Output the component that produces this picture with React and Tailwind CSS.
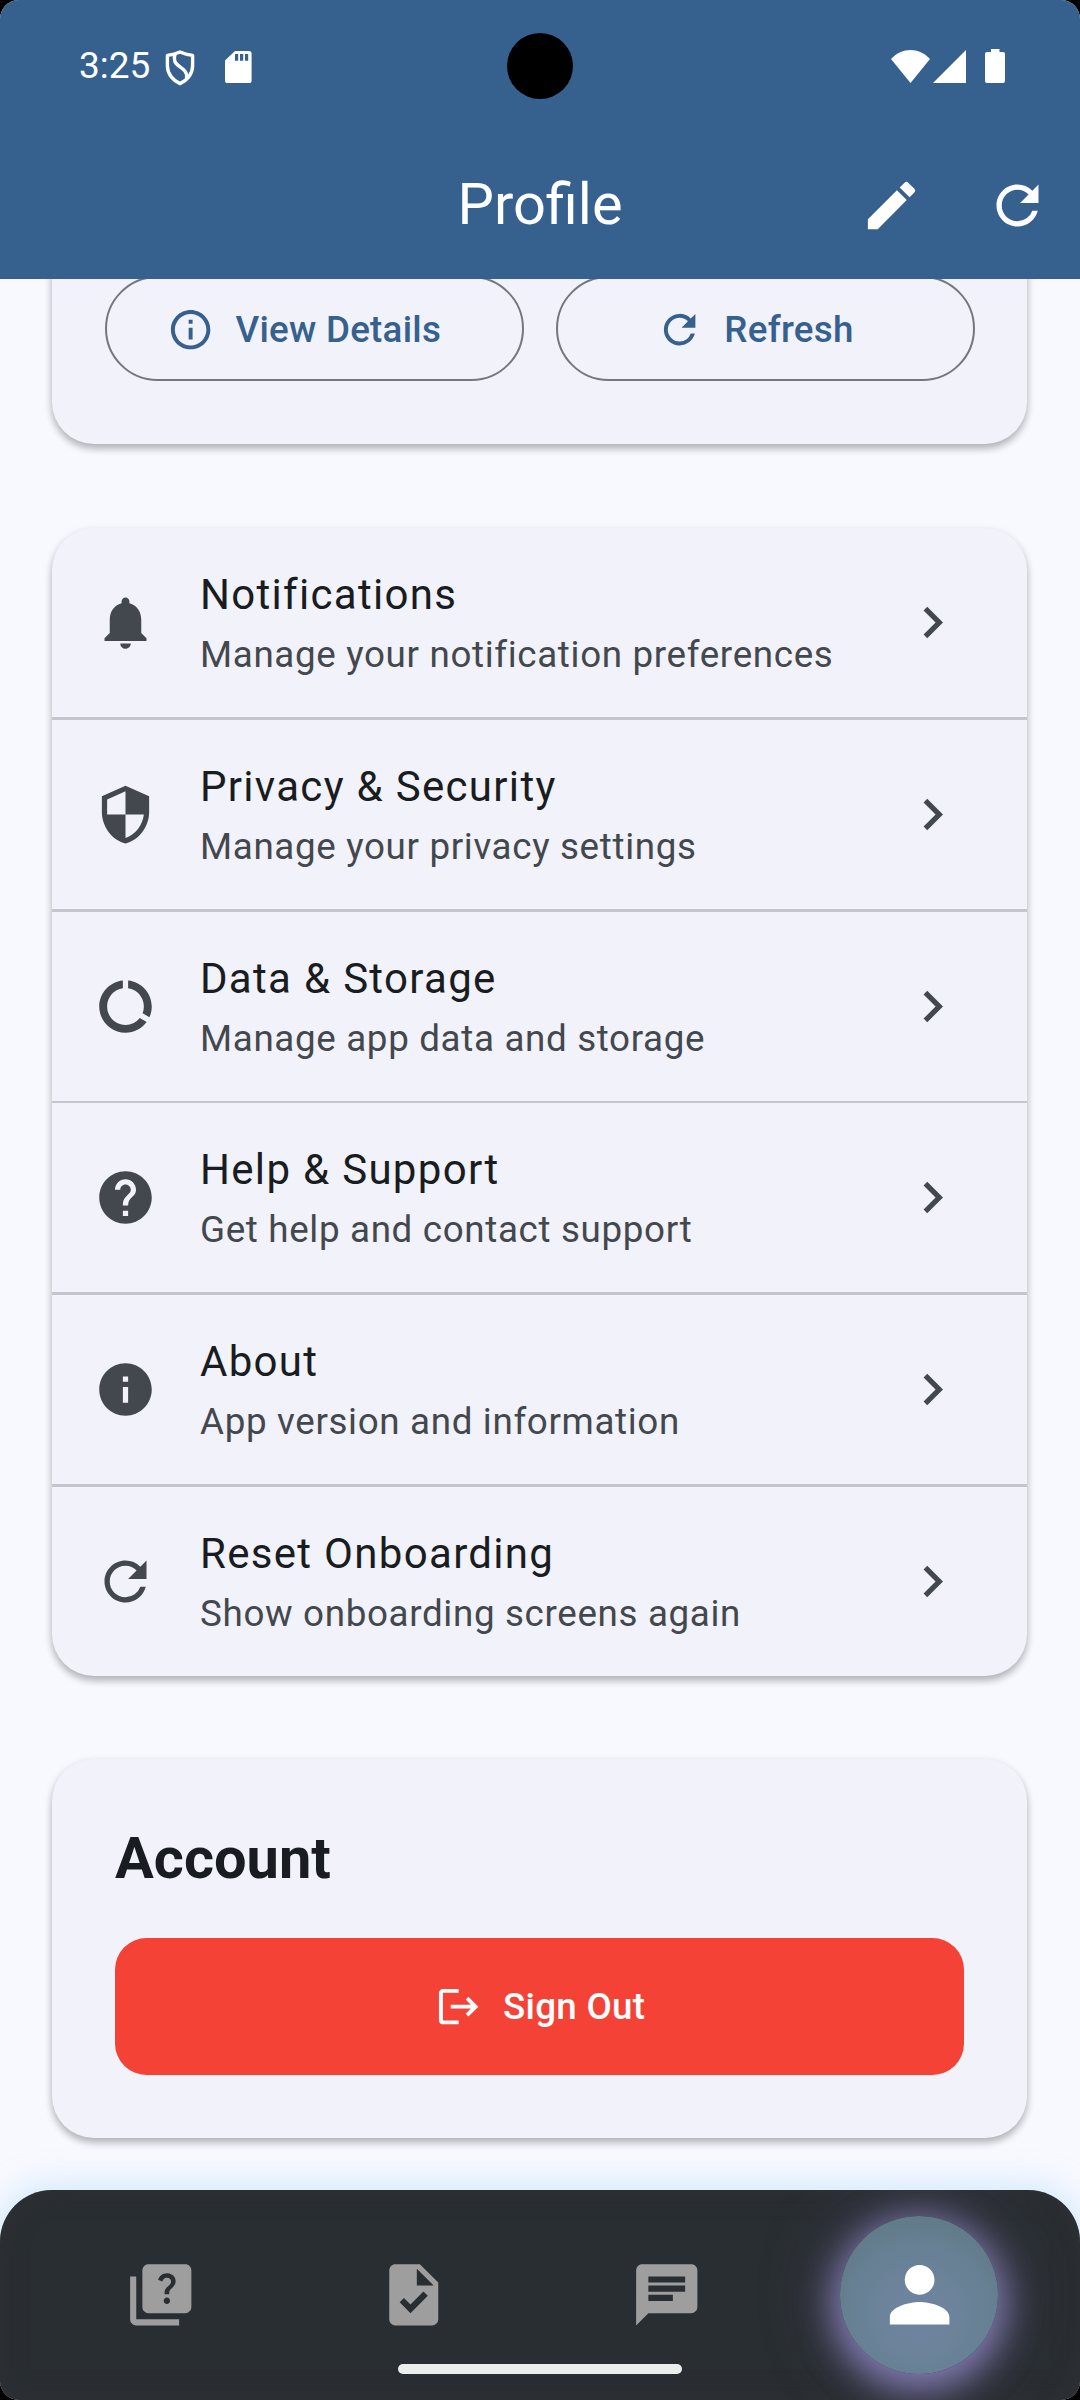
import {
  MdEdit, MdRefresh, MdNotifications, MdSecurity, MdDataUsage, MdHelp, MdInfo,
  MdOutlineInfo, MdQuiz, MdTask, MdChat, MdPerson, MdChevronRight,
} from "react-icons/md";

const settings = [
  { icon: MdNotifications, title: "Notifications", sub: "Manage your notification preferences", line: "h-[3px]" },
  { icon: MdSecurity, title: "Privacy & Security", sub: "Manage your privacy settings", line: "h-[3px]" },
  { icon: MdDataUsage, title: "Data & Storage", sub: "Manage app data and storage", line: "h-[2px]" },
  { icon: MdHelp, title: "Help & Support", sub: "Get help and contact support", line: "h-[3px]" },
  { icon: MdInfo, title: "About", sub: "App version and information", line: "h-[3px]" },
  { icon: MdRefresh, title: "Reset Onboarding", sub: "Show onboarding screens again", line: null },
];

const CARD = "rounded-[42px] bg-[#f1f2fa] shadow-[0_5px_7px_rgba(0,0,0,0.2),0_3px_10px_rgba(0,0,0,0.12)]";

function StatusBar() {
  return (
    <div className="grid h-[132px] grid-cols-[507px_66px_507px] items-center text-white">
      <div className="flex items-center pl-[79px]">
        <span className="text-[37px] leading-[44px]">3:25</span>
        <svg className="ml-[15px] mt-[3px] h-[36px] w-[30px]" viewBox="0 0 30 36" fill="none" stroke="currentColor" strokeWidth="3.4" strokeLinejoin="round">
          <path d="M15 2 C18.5 3.6 23 4.8 27.6 5.4 V16 C27.6 24 22 30.5 15 33.6 C8 30.5 2.4 24 2.4 16 V5.4 C7 4.8 11.5 3.6 15 2 Z" />
          <path d="M10 4.2 C6 19 23.5 15.5 21.6 28" />
        </svg>
        <svg className="ml-[30px] mt-[2px] h-[32px] w-[27px]" viewBox="0 0 27 32" fill="currentColor">
          <path fillRule="evenodd" d="M10 0 H24 Q26.6 0 26.6 2.6 V29.4 Q26.6 32 24 32 H2.6 Q0 32 0 29.4 V9.5 Z M10 3 V9.7 H13.2 V3 Z M15 3 V9.7 H18.2 V3 Z M20 3 V9.7 H23.2 V3 Z" />
        </svg>
      </div>
      <div className="size-[66px] rounded-full bg-black" />
      <div className="flex items-center pl-[318px]">
        <svg className="h-[33px] w-[39px]" viewBox="0 0 39 33" fill="currentColor">
          <path d="M19.5 33 L0 9 C11 -3 28 -3 39 9 Z" />
        </svg>
        <svg className="ml-[3px] h-[33px] w-[33px]" viewBox="0 0 33 33" fill="currentColor">
          <path d="M33 0 V33 H0 Z" />
        </svg>
        <svg className="ml-[19px] h-[34px] w-[20px]" viewBox="0 0 20 34" fill="currentColor">
          <path d="M6 0 H14.5 V3 H18 Q20 3 20 5 V32 Q20 34 18 34 H2 Q0 34 0 32 V5 Q0 3 2 3 H6 Z" />
        </svg>
      </div>
    </div>
  );
}

function Header() {
  return (
    <header className="relative z-10 h-[279px] shrink-0 bg-[#36618e] text-white">
      <StatusBar />
      <div className="grid h-[147px] grid-cols-[252px_1fr_252px] items-center">
        <span />
        <h1 className="pb-[3px] text-center text-[57.75px] leading-[73px]">Profile</h1>
        <div className="flex">
          <button className="flex size-[126px] items-center justify-center"><MdEdit className="size-[63px]" /></button>
          <button className="flex size-[126px] items-center justify-center"><MdRefresh className="size-[63px]" /></button>
        </div>
      </div>
    </header>
  );
}

function PillButton({ icon: Icon, label }) {
  return (
    <button className="flex h-[105px] flex-1 items-center justify-center gap-[21px] rounded-full border-2 border-[#73777f] pr-[21px] pt-[2px] text-[36.75px] font-medium tracking-[0.26px] text-[#36618e]">
      <Icon className="size-[47.25px]" />
      {label}
    </button>
  );
}

function SettingRow({ item }) {
  const Icon = item.icon;
  return (
    <>
      <div className="flex h-[189px] items-center pl-[42px] pr-[63px]">
        <Icon className="size-[63px] shrink-0 text-[#43474e]" />
        <div className="ml-[43px] flex-1">
          <div className="mb-[4px] text-[42px] leading-[61px] tracking-[1.31px] text-[#191c20]">{item.title}</div>
          <div className="text-[36.75px] leading-[52.5px] tracking-[0.66px] text-[#43474e]">{item.sub}</div>
        </div>
        <MdChevronRight className="size-[63px] shrink-0 text-[#43474e]" />
      </div>
      {item.line && <div className={`${item.line} bg-[#c3c6cf]`} />}
    </>
  );
}

function LogoutIcon() {
  return (
    <svg className="size-[47.25px]" viewBox="0 0 24 24" fill="currentColor">
      <path d="M17 7l-1.41 1.41L18.17 11H8v2h10.17l-2.58 2.58L17 17l5-5zM4 5h8V3H4c-1.1 0-2 .9-2 2v14c0 1.1.9 2 2 2h8v-2H4V5z" />
    </svg>
  );
}

function BottomNav() {
  return (
    <nav className="relative mt-auto h-[210px] shrink-0 overflow-visible rounded-t-[52px] shadow-[0_0_32px_6px_rgba(192,226,252,0.7)]">
      <div className="relative grid h-full grid-cols-4 items-center overflow-hidden rounded-t-[52px] bg-[#292e32] px-[34.5px] text-[#9e9e9e] shadow-[inset_0_0_26px_#2f3033]">
        <div className="flex justify-center"><MdQuiz className="size-[73.5px]" /></div>
        <div className="flex justify-center"><MdTask className="size-[73.5px]" /></div>
        <div className="flex justify-center"><MdChat className="size-[73.5px]" /></div>
        <div className="flex justify-center">
          <div className="flex size-[158px] items-center justify-center rounded-full bg-[radial-gradient(circle_at_50%_62%,#6e849e_20%,#678093_55%,#607985_85%)] text-white shadow-[0_9px_34px_8px_rgba(150,140,205,0.78),0_0_70px_14px_rgba(100,95,140,0.3)]">
            <MdPerson className="size-[89.25px]" />
          </div>
        </div>
      </div>
      <div className="absolute bottom-[26px] left-[398px] h-[10px] w-[284px] rounded-full bg-[#eceeed]" />
    </nav>
  );
}

export default function App() {
  return (
    <div className="h-[2400px] w-[1080px] bg-black font-['Roboto',sans-serif]">
      <div className="flex h-full flex-col overflow-hidden rounded-[19px] bg-[#f8f9ff]">
        <Header />
        <main className="flex flex-col pl-[52px] pr-[53px]">
          <section className={`${CARD} -mt-[60px] flex h-[225px] items-end gap-[31.5px] pl-[53px] pr-[52px] pb-[63px]`}>
            <PillButton icon={MdOutlineInfo} label="View Details" />
            <PillButton icon={MdRefresh} label="Refresh" />
          </section>
          <section className={`${CARD} mt-[84px] h-[1148px] overflow-hidden`}>
            {settings.map((s) => <SettingRow key={s.title} item={s} />)}
          </section>
          <section className={`${CARD} mt-[83px] h-[379px] px-[63px] pt-[63px]`}>
            <h2 className="text-[57.75px] font-bold leading-[73px] text-[#191c20]">Account</h2>
            <button className="mt-[43px] flex h-[137px] w-full items-center justify-center gap-[21px] rounded-[31.5px] bg-[#f44336] pl-px text-[36.75px] font-medium tracking-[0.26px] text-white">
              <LogoutIcon />
              Sign Out
            </button>
          </section>
        </main>
        <BottomNav />
      </div>
    </div>
  );
}
